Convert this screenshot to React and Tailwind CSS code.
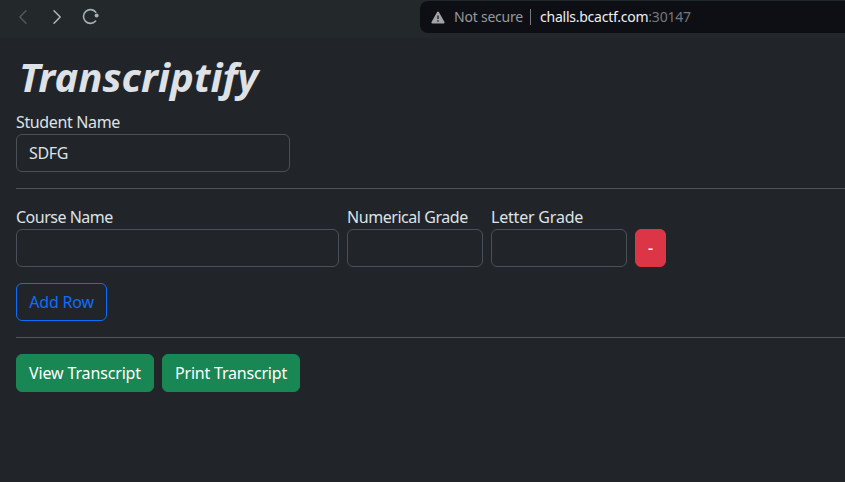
function Label({ children, className = "" }) {
  return <span className={`block h-6 whitespace-nowrap leading-6 ${className}`}>{children}</span>;
}

function Input({ className, value = "" }) {
  return (
    <input
      className={`block h-[38px] rounded-md border border-[#495057] bg-[#212529] px-3 tracking-[-0.3px] text-[#dee2e6] outline-none ${className}`}
      defaultValue={value}
    />
  );
}

function Button({ className, children }) {
  return (
    <button className={`flex h-[38px] items-center justify-center whitespace-nowrap rounded-md border leading-6 ${className}`}>
      {children}
    </button>
  );
}

function BrowserBar() {
  return (
    <header className="flex h-[38px] items-start bg-[#23282b]">
      <div className="flex w-[420px] shrink-0">
        <svg width="110" height="34" viewBox="0 0 110 34" fill="none" strokeWidth="1.4" strokeLinecap="round" strokeLinejoin="round">
          <path d="M26 10.7 19.8 17 26 23.3" stroke="#53595c" />
          <path d="M54 10.7 60.2 17 54 23.3" stroke="#b4babd" />
          <path d="M95.8 12.2A6.9 6.9 0 1 0 95.6 21" stroke="#a3b0b6" strokeWidth="1.6" />
          <circle cx="96.6" cy="15.4" r="2" fill="#a3b0b6" />
        </svg>
      </div>
      <div className="mt-px flex h-8 flex-1 items-center rounded-l-lg bg-[#0e0f14] pl-[11px] text-sm">
        <svg width="14" height="13" viewBox="0 0 14 13" className="shrink-0">
          <path d="M7 1.5 12.6 11.5H1.4Z" fill="#a1a4a8" stroke="#a1a4a8" strokeWidth="2" strokeLinejoin="round" />
          <path d="M7 4.6v3.4M7 9.3v1.4" stroke="#0e0f14" strokeWidth="1.2" />
        </svg>
        <span className="ml-[9px] w-[76px] whitespace-nowrap tracking-[-0.22px] text-[#96999d]">Not secure</span>
        <span className="h-4 w-px bg-[#777a7e]" />
        <span className="ml-[9px] whitespace-nowrap tracking-[-0.24px] text-[#eef0f2]">
          challs.bcactf.com<span className="text-[#74787c]">:30147</span>
        </span>
      </div>
    </header>
  );
}

export default function App() {
  return (
    <div className="h-[482px] w-[845px] overflow-hidden bg-[#212529] font-['Noto_Sans',sans-serif] text-base text-[#dee2e6]">
      <BrowserBar />
      <main className="pl-4 pt-[15px]">
        <h1 className="h-[57px] whitespace-nowrap pl-[3px] text-[40px] font-bold italic leading-[48px] tracking-[0.08px]">Transcriptify</h1>
        <Label className="tracking-[-0.36px]">Student Name</Label>
        <Input className="w-[274px]" value="SDFG" />
        <hr className="my-4 border-[#515559]" />
        <div className="flex items-end gap-2">
          <label>
            <Label className="tracking-[-0.5px]">Course Name</Label>
            <Input className="w-[323px]" />
          </label>
          <label>
            <Label className="tracking-[-0.45px]">Numerical Grade</Label>
            <Input className="w-[136px]" />
          </label>
          <label>
            <Label className="tracking-[-0.2px]">Letter Grade</Label>
            <Input className="w-[136px]" />
          </label>
          <Button className="w-[31px] border-[#dc3545] bg-[#dc3545] font-medium text-white">-</Button>
        </div>
        <Button className="mt-4 w-[91px] border-[#0d6efd] tracking-[-0.2px] text-[#0d6efd]">Add Row</Button>
        <hr className="my-4 border-[#515559]" />
        <div className="flex gap-2">
          <Button className="w-[138px] border-[#198754] bg-[#198754] tracking-[-0.15px] text-white">View Transcript</Button>
          <Button className="w-[138px] border-[#198754] bg-[#198754] tracking-[-0.2px] text-white">Print Transcript</Button>
        </div>
      </main>
    </div>
  );
}
